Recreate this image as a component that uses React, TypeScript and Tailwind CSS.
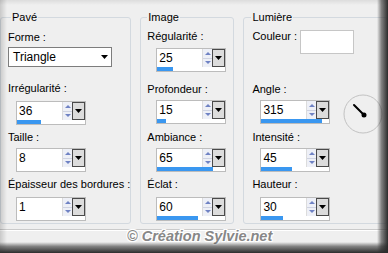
import React from 'react'

const Spinner = ({ value, bar }: { value: string; bar: number }) => (
  <div className="w-[70px] h-[24px] border border-[#bcbcbc] bg-white flex flex-col">
    <div className="flex h-[18px]">
      <div className="flex-1 pl-[2px] text-[12px] leading-[18px]">{value}</div>
      <div className="w-[10px] flex flex-col bg-[#eef0f7] border-l border-[#dcdcdc]">
        <div className="flex-1 flex items-center justify-center border-b border-[#cfd3e2]">
          <svg width="6" height="3" viewBox="0 0 6 3">
            <path d="M3 0L6 3H0z" fill="#6f82c4" />
          </svg>
        </div>
        <div className="flex-1 flex items-center justify-center">
          <svg width="6" height="3" viewBox="0 0 6 3">
            <path d="M0 0H6L3 3z" fill="#6f82c4" />
          </svg>
        </div>
      </div>
      <div className="w-[13px] border border-[#4a4a4a] bg-[#dcdcdc] flex items-center justify-center">
        <svg width="7" height="4" viewBox="0 0 7 4">
          <path d="M0 0H7L3.5 4z" fill="#000" />
        </svg>
      </div>
    </div>
    <div className="h-[4px]">
      <div className="h-full bg-[#3a97f0]" style={{ width: bar }} />
    </div>
  </div>
)

const Label = ({ text, className }: { text: string; className: string }) => (
  <div className={`leading-[14px] whitespace-nowrap ${className}`}>{text}</div>
)

export default function App() {
  return (
    <div className="relative w-[388px] h-[253px] overflow-hidden bg-[#efefef] text-[11px] text-black font-['Liberation_Sans',Arial,sans-serif]">
      <div className="flex pt-[10px]">
        {/* Pavé */}
        <fieldset className="w-[130px] h-[214px] border border-[#d3d9df] rounded-[3px]">
          <legend className="ml-[10px] px-[1px] leading-[14px]">Pavé</legend>
          <div className="pl-[7px]">
            <Label text="Forme :" className="mt-[6px]" />
            <div className="mt-[3px] w-[104px] h-[20px] border border-[#7d7d7d] bg-white flex items-center">
              <span className="flex-1 pl-[4px] text-[12px]">Triangle</span>
              <svg width="7" height="4" viewBox="0 0 7 4" className="mr-[3px]">
                <path d="M0 0H7L3.5 4z" fill="#000" />
              </svg>
            </div>
            <Label text="Irrégularité :" className="mt-[14px]" />
            <div className="mt-[6px] ml-[8px]"><Spinner value="36" bar={24} /></div>
            <Label text="Taille :" className="mt-[5px]" />
            <div className="mt-[4px] ml-[8px]"><Spinner value="8" bar={0} /></div>
            <Label text="Épaisseur des bordures :" className="mt-[5px]" />
            <div className="mt-[6px] ml-[8px]"><Spinner value="1" bar={0} /></div>
          </div>
        </fieldset>

        {/* Image */}
        <fieldset className="ml-[9px] w-[95px] h-[214px] border border-[#d3d9df] rounded-[3px]">
          <legend className="ml-[6px] px-[1px] leading-[14px]">Image</legend>
          <div className="pl-[6px]">
            <Label text="Régularité :" className="mt-[5px]" />
            <div className="mt-[5px] ml-[9px]"><Spinner value="25" bar={16} /></div>
            <Label text="Profondeur :" className="mt-[10px]" />
            <div className="mt-[4px] ml-[9px]"><Spinner value="15" bar={9} /></div>
            <Label text="Ambiance :" className="mt-[6px]" />
            <div className="mt-[4px] ml-[9px]"><Spinner value="65" bar={56} /></div>
            <Label text="Éclat :" className="mt-[5px]" />
            <div className="mt-[6px] ml-[9px]"><Spinner value="60" bar={41} /></div>
          </div>
        </fieldset>

        {/* Lumière */}
        <fieldset className="ml-[9px] w-[146px] h-[214px] border border-[#d3d9df] rounded-[3px]">
          <legend className="ml-[7px] px-[1px] leading-[14px]">Lumière</legend>
          <div className="pl-[8px]">
            <div className="mt-[5px] flex items-start">
              <Label text="Couleur :" className="w-[48px]" />
              <div className="mt-[1px] w-[54px] h-[24px] bg-white border border-[#c6c6c6]" />
            </div>
            <Label text="Angle :" className="mt-[28px]" />
            <div className="mt-[4px] ml-[8px] flex items-start">
              <Spinner value="315" bar={61} />
              <svg width="40" height="40" viewBox="0 0 40 40" className="ml-[13px] -mt-[6px] -mb-[10px]">
                <circle cx="20" cy="20" r="19" fill="none" stroke="#c2c2c2" strokeWidth="1" />
                <path d="M21 21L11 11" stroke="#000" strokeWidth="2" strokeLinecap="round" />
                <circle cx="21" cy="21" r="2.5" fill="#000" />
              </svg>
            </div>
            <Label text="Intensité :" className="mt-[6px]" />
            <div className="mt-[4px] ml-[8px]"><Spinner value="45" bar={31} /></div>
            <Label text="Hauteur :" className="mt-[5px]" />
            <div className="mt-[6px] ml-[8px]"><Spinner value="30" bar={22} /></div>
          </div>
        </fieldset>
      </div>

      <div className="mt-[5px] border-t border-[#cacaca] border-b border-b-white" />

      {/* watermark */}
      <div className="absolute left-[127px] top-[229px] text-[14.5px] leading-none font-bold italic text-[#878787] whitespace-nowrap [text-shadow:0_0_2px_#fff,1px_1px_0_#fff,-1px_-1px_0_#fff,1px_-1px_0_#fff,-1px_1px_0_#fff]">
        © Création Sylvie.net
      </div>

      {/* frame shading */}
      <div className="absolute left-0 top-0 w-[7px] h-full bg-[linear-gradient(to_right,rgba(0,0,0,0.16),rgba(0,0,0,0))]" />
      <div className="absolute left-0 top-0 w-full h-[5px] bg-[linear-gradient(to_bottom,rgba(0,0,0,0.08),rgba(0,0,0,0))]" />
      <div className="absolute right-0 top-0 w-[11px] h-full bg-[linear-gradient(to_right,rgba(40,40,40,0),rgba(40,40,40,0.55)_40%,#2c2c2c)]" />
      <div className="absolute left-0 bottom-0 w-full h-[11px] bg-[linear-gradient(to_bottom,rgba(40,40,40,0),rgba(40,40,40,0.55)_40%,#2c2c2c)]" />
    </div>
  )
}
